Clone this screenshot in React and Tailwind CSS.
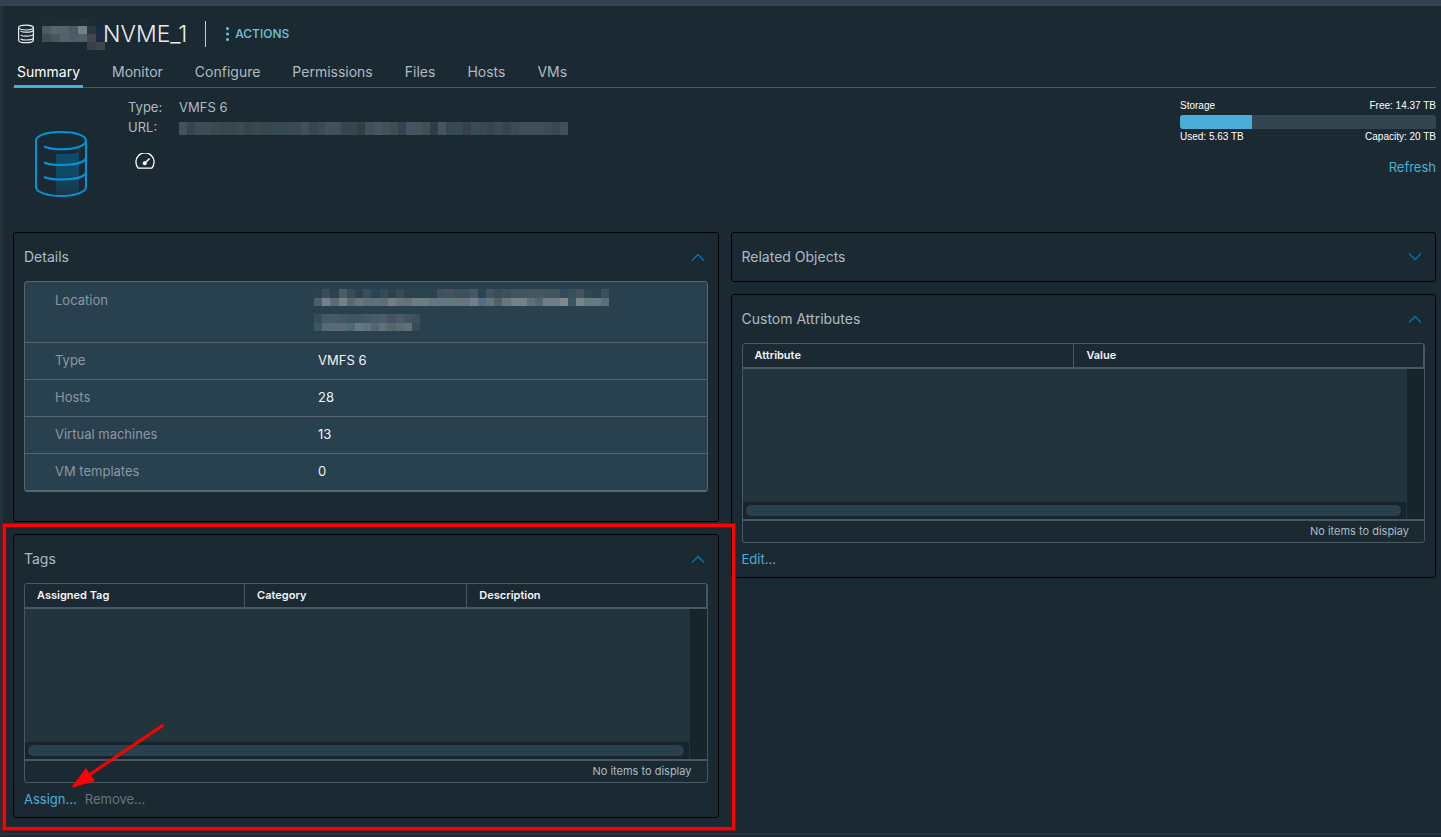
import { useState } from "react";

const TABS = ["Summary", "Monitor", "Configure", "Permissions", "Files", "Hosts", "VMs"];

const DETAILS = [
  ["Type", "VMFS 6"],
  ["Hosts", "28"],
  ["Virtual machines", "13"],
  ["VM templates", "0"],
];

// Redacted values, one colour per block
const NAME_BLOCKS = [
  "#1d2b33 #1d2b33 #1f2c35 #1d2c33 #1f2d35 #1d2b33 #1b2a32".split(" "),
  "#4c5966 #5a6768 #58636f #4d5b61 #727e86 #2b363d #1d2b42".split(" "),
  "#3c4d55 #44555b #555f70 #4f5c68 #525e68 #41474b #1d2b42".split(" "),
  "#1b2a32 #1b2a32 #1b2a32 #1b2a32 #1b2a32 #34414b #3d464d".split(" "),
];

const URL_BLOCKS = [
  "#43505d #36454d #3c4d58 #3c4d58 #3a4850 #38474c #3a464e #3c4a56 #35454c #384850 #36464a #364752 #344a52 #384950 #3c4852 #434f5d #344852 #3e4a57 #44505e #444f5c #38454f #36444b #2e3f46 #424f5a #475461 #44515d #414b50 #32424e #445362 #445362 #444d52 #2b3d47 #46545e #354852 #374a55 #383f48 #3a4a57 #384955 #36454b #3c4a57 #34444f #3d4955 #424d59 #424d59 #424d59 #3e4a57 #3b4650 #424e58".split(" "),
];

const LOCATION_BLOCKS = [
  "#2b414e #384d5c #2a434e #4a5d6b #374d58 #2b434e #384f5b #2b4450 #344b57 #2b424e #344d55 #2b424f #2b424f #2b424f #2b424f #3e515d #42545f #3c515d #3e515d #455865 #2b4451 #42545f #384e59 #3c515b #42545f #42545f #465763 #465763 #42545f #42545f #34495a #384f5a #42545f #2f4652 #2b424f #3c505c".split(" "),
  "#4c5f6d #757e8e #5b6d74 #758087 #566975 #6c727f #5b7372 #5e6e7a #5e6e76 #6f8083 #6e7080 #5e7278 #6e7c83 #6e7c83 #667681 #667681 #5c7880 #677779 #65757c #707f8a #546d80 #66747a #4e6266 #68767f #74818a #74818a #5e6f7e #54666b #6e7d87 #6e7d87 #7d888f #3c5560 #77858a #647a83 #667a84 #5e6c78".split(" "),
];

const LOCATION_BLOCKS_2 = [
  "#364e5a #465965 #465965 #445663 #3c5562 #42545f #425a68 #4a5a68 #4c5c6c #42545f #4a5a68 #42545f #3c505c".split(" "),
  "#3c5560 #586a76 #586a76 #586978 #4c6872 #647882 #5e7279 #52656d #606e80 #54666c #5c6a72 #5e707a #364b56".split(" "),
];

function Mosaic({ rows, className }) {
  return (
    <svg
      aria-hidden="true"
      className={className}
      viewBox={`0 0 ${rows[0].length} ${rows.length}`}
      preserveAspectRatio="none"
      shapeRendering="crispEdges"
    >
      {rows.map((row, y) =>
        row.map((color, x) => <rect key={`${x}-${y}`} x={x} y={y} width="1" height="1" fill={color} />)
      )}
    </svg>
  );
}

function DatastoreIcon() {
  return (
    <svg className="w-[18px] h-5" viewBox="0 0 18 20" fill="none" stroke="#e9ecef" strokeWidth="1.2" aria-hidden="true">
      <ellipse cx="9" cy="3.6" rx="7.4" ry="2.4" />
      <path d="M1.6 3.6v12.6c0 1.4 3.3 2.5 7.4 2.5s7.4-1.1 7.4-2.5V3.6" />
      <path d="M3.6 7.3c1.4.6 3.2.9 5.4.9 3.8 0 7-.8 7.4-2M3.6 11.2c1.4.6 3.2.9 5.4.9 3.8 0 7-.8 7.4-2M3.6 15.1c1.4.6 3.2.9 5.4.9 3.8 0 7-.8 7.4-2" />
    </svg>
  );
}

function DatastoreLogo() {
  return (
    <svg className="w-[54px] h-[68px]" viewBox="0 0 54 68" fill="none" stroke="#0095d9" strokeWidth="2" aria-hidden="true">
      <defs>
        <linearGradient id="glow" x1="0" y1="0" x2="0" y2="1">
          <stop offset="0" stopColor="#0f4d6d" />
          <stop offset="0.6" stopColor="#124660" />
          <stop offset="1" stopColor="#1a3544" />
        </linearGradient>
      </defs>
      <path d="M22 24h12c5 0 8-1 11-2v41c-6 2-15 3-23 2z" fill="url(#glow)" stroke="none" />
      <path d="M2 10.5C2 5.5 13 2 27 2s25 3.5 25 8.5V57c0 5-11 9-25 9S2 62 2 57z" />
      <path d="M10 16.5c5 2 11 2.8 17 2.8 14 0 25-3 25-9M10 32.5c5 2 11 2.5 17 2.500 14 0 25-2.500 25-8M10 47c5 2 11 2.500 17 2.500 14 0 25-2.500 25-8" />
    </svg>
  );
}

function GaugeIcon() {
  return (
    <svg className="w-5 h-4" viewBox="0 0 20 16" aria-hidden="true">
      <path d="M3.3 15.2h13.4a9.1 9.1 0 1 0-13.4 0z" fill="none" stroke="#fff" strokeWidth="1.3" />
      <path d="M14.600 5.500 9.700 10.300" stroke="#fff" strokeWidth="1.5" />
      <circle cx="9.700" cy="10.300" r="2" fill="#fff" />
    </svg>
  );
}

function Panel({ title, open = true, className = "", children }) {
  const [expanded, setExpanded] = useState(open);
  return (
    <section className={`relative border border-black rounded-[3px] ${className}`}>
      <div className="flex items-center justify-between h-12 pl-[10px] pr-3">
        <h2 className="text-sm text-[#adbbc4]">{title}</h2>
        <button type="button" aria-label={`Toggle ${title}`} aria-expanded={expanded} onClick={() => setExpanded(!expanded)}>
          <svg className="w-4 h-4" viewBox="0 0 16 16" fill="none" stroke="#0079ad" strokeWidth="1.3">
            <path d={expanded ? "M2 11.5 8 5.5l6 6" : "M2 4.5l6 6 6-6"} />
          </svg>
        </button>
      </div>
      {expanded && children}
    </section>
  );
}

function EmptyGrid({ columns }) {
  return (
    <div className="mx-[10px] border border-[#485764] rounded-[3px]">
      <table className="w-full table-fixed border-separate border-spacing-0 text-[11px]">
        <thead>
          <tr className="h-[25px]">
            {columns.map((col) => (
              <th
                key={col.name}
                className={`border-b-2 border-r border-[#485764] pl-3 py-0 text-left font-semibold text-[#f1f3f5] ${col.width}`}
              >
                {col.name}
              </th>
            ))}
          </tr>
        </thead>
        <tbody>
          <tr>
            <td colSpan={columns.length} className="p-0">
              <div className="flex h-[150px] bg-[#18242b]">
                <div className="flex-1 flex flex-col">
                  <div className="flex-1 bg-[#22343c]" />
                  <div className="h-[17px] pl-[3px] pr-[5px] py-[3px] border-r border-[#22343c]">
                    <div className="h-[11px] rounded-full bg-[#29404e]" />
                  </div>
                </div>
                <div className="w-[17px]" />
              </div>
            </td>
          </tr>
        </tbody>
        <tfoot>
          <tr className="h-[23px]">
            <td colSpan={columns.length} className="border-t-2 border-[#485764] py-0 pr-[15px] text-right text-[#adbbc4]">
              No items to display
            </td>
          </tr>
        </tfoot>
      </table>
    </div>
  );
}

// Red frame and arrow pointing at the Assign link
function Callout() {
  return (
    <div className="pointer-events-none absolute -left-3 -right-[18px] -top-[12px] -bottom-[14px] z-10 border border-[#8a1119]">
      <div className="h-full border-3 border-[#ff0000]" />
      <svg className="absolute left-[65px] bottom-[38px] w-[100px] h-[70px]" viewBox="0 0 100 70">
        <path d="M95.500 3 21 53" stroke="#ff0000" strokeWidth="3" />
        <path d="M3 66 18 46l9 13z" fill="#ff0000" />
      </svg>
    </div>
  );
}

export default function App() {
  const [tab, setTab] = useState("Summary");

  return (
    <div className="min-h-screen flex flex-col bg-[#1b2a32] font-[Inter,sans-serif] text-[13px] text-[#adbbc4]">
      <div className="h-[6px] bg-[#314351]" />
      <div className="flex-1 border-l-[3px] border-[#22323b] pl-[10px] pr-[5px]">
        <header className="flex items-center h-14 pl-1">
          <DatastoreIcon />
          <Mosaic rows={NAME_BLOCKS} className="ml-[7px] w-[63px] h-8" />
          <h1 className="-ml-[2px] text-[23px] font-light text-[#e9ecef]">NVME_1</h1>
          <div className="ml-[18px] w-px h-[26px] bg-[#c3cbd1]" />
          <button type="button" className="flex items-center gap-[6px] ml-5 text-xs font-medium text-[#70c5d8]">
            <svg className="w-[3px] h-4" viewBox="0 0 3 16" fill="#70c5d8" aria-hidden="true">
              <circle cx="1.5" cy="2.5" r="1.5" />
              <circle cx="1.5" cy="8" r="1.5" />
              <circle cx="1.5" cy="13.5" r="1.5" />
            </svg>
            ACTIONS
          </button>
        </header>

        <nav className="flex gap-[26px] h-[26px] pl-px text-sm border-b border-[#485764]">
          {TABS.map((name) => (
            <button
              key={name}
              type="button"
              onClick={() => setTab(name)}
              className={
                name === tab
                  ? "h-[26px] px-[3px] pb-[5px] leading-5 border-b-3 border-[#49afd9] text-white"
                  : "h-[26px] px-[3px] pb-[5px] leading-5 border-b-3 border-transparent"
              }
            >
              {name}
            </button>
          ))}
        </nav>

        <div className="flex h-36">
          <div className="pt-[42px] pl-[21px] w-[115px]">
            <DatastoreLogo />
          </div>
          <div className="flex-1 pt-[9px]">
            <dl className="grid grid-cols-[51px_1fr] leading-5">
              <dt>Type:</dt>
              <dd>VMFS 6</dd>
              <dt>URL:</dt>
              <dd className="flex items-end pb-[2px]">
                <Mosaic rows={URL_BLOCKS} className="w-[389px] h-[13px]" />
              </dd>
            </dl>
            <div className="pt-4 pl-[7px]">
              <GaugeIcon />
            </div>
          </div>
          <div className="w-64 pt-3 font-['Liberation_Sans',sans-serif] text-[10px] leading-3 text-white">
            <div className="flex justify-between pb-[3px]">
              <span>Storage</span>
              <span>Free: 14.37 TB</span>
            </div>
            <div className="h-[14px] rounded-[3px] overflow-hidden bg-[#314650]">
              <div className="h-full w-[28%] bg-[#49afd9]" />
            </div>
            <div className="flex justify-between pt-[2px]">
              <span>Used: 5.63 TB</span>
              <span>Capacity: 20 TB</span>
            </div>
            <div className="pt-[14px] text-right font-[Inter,sans-serif] text-[13px] leading-5">
              <a href="#refresh" className="text-[#49afd9]">Refresh</a>
            </div>
          </div>
        </div>

        <main className="grid grid-cols-2 items-start gap-3">
          <div className="flex flex-col gap-3">
            <Panel title="Details" className="pb-[29px]">
              <div className="mx-[10px] border border-[#566573] rounded-[3px] bg-[#29404e]">
                <table className="w-full table-fixed border-separate border-spacing-0 text-left">
                  <tbody>
                    <tr className="h-[61px]">
                      <th className="w-[289px] pl-[30px] pt-2 align-top leading-5 font-normal text-[#8a98a3] border-b border-[#566573]">
                        Location
                      </th>
                      <td className="pt-[7px] pb-[10px] align-top border-b border-[#566573]">
                        <Mosaic rows={LOCATION_BLOCKS} className="block w-[295px] h-[17px]" />
                        <Mosaic rows={LOCATION_BLOCKS_2} className="block mt-2 w-[106px] h-[17px]" />
                      </td>
                    </tr>
                    {DETAILS.map(([label, value]) => (
                      <tr key={label} className="h-[37px]">
                        <th className="pl-[30px] font-normal text-[#8a98a3] border-b border-[#566573]">{label}</th>
                        <td className="pl-1 text-[#f1f3f5] border-b border-[#566573]">{value}</td>
                      </tr>
                    ))}
                  </tbody>
                </table>
              </div>
            </Panel>

            <Panel title="Tags">
              <EmptyGrid
                columns={[
                  { name: "Assigned Tag", width: "w-[32.3%]" },
                  { name: "Category", width: "w-[32.6%]" },
                  { name: "Description", width: "" },
                ]}
              />
              <div className="flex items-center gap-2 h-[34px] px-[10px]">
                <a href="#assign" className="text-[#49afd9]">Assign...</a>
                <button type="button" disabled className="text-[#66747c]">Remove...</button>
              </div>
              <Callout />
            </Panel>
          </div>

          <div className="flex flex-col gap-3">
            <Panel title="Related Objects" open={false} />
            <Panel title="Custom Attributes">
              <EmptyGrid
                columns={[
                  { name: "Attribute", width: "w-[48.7%]" },
                  { name: "Value", width: "" },
                ]}
              />
              <div className="flex items-center h-[34px] px-[10px]">
                <a href="#edit" className="text-[#49afd9]">Edit...</a>
              </div>
            </Panel>
          </div>
        </main>
      </div>
      <div className="h-1 border-t-2 border-[#25343e]" />
    </div>
  );
}
